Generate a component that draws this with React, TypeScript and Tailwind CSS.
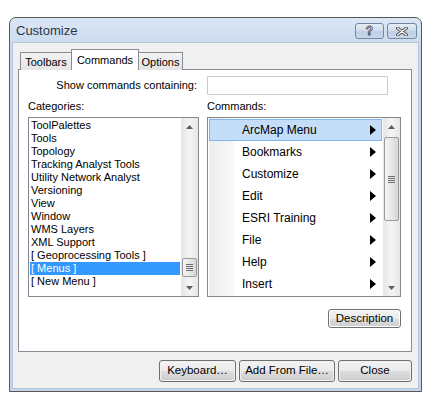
import React from 'react'

const categories = [
  'ToolPalettes',
  'Tools',
  'Topology',
  'Tracking Analyst Tools',
  'Utility Network Analyst',
  'Versioning',
  'View',
  'Window',
  'WMS Layers',
  'XML Support',
  '[ Geoprocessing Tools ]',
  '[ Menus ]',
  '[ New Menu ]',
]

const commands = ['ArcMap Menu', 'Bookmarks', 'Customize', 'Edit', 'ESRI Training', 'File', 'Help', 'Insert']

function Arrow({ dir }: { dir: 'up' | 'down' }) {
  return (
    <svg width="7" height="4" viewBox="0 0 7 4">
      {dir === 'up' ? <path d="M0 4 L3.5 0 L7 4 Z" fill="#5d5d5d" /> : <path d="M0 0 L3.5 4 L7 0 Z" fill="#5d5d5d" />}
    </svg>
  )
}

function Grip() {
  return (
    <div className="flex flex-col gap-[1px] items-center">
      <div className="w-[7px] h-[1px] bg-[#6d6d6d]" />
      <div className="w-[7px] h-[1px] bg-[#6d6d6d]" />
      <div className="w-[7px] h-[1px] bg-[#6d6d6d]" />
      <div className="w-[7px] h-[1px] bg-[#6d6d6d]" />
    </div>
  )
}

function ScrollBar({ thumbTop, thumbHeight }: { thumbTop: number; thumbHeight: number }) {
  return (
    <div className="relative w-[17px] h-full bg-gradient-to-r from-[#e6e6e6] via-[#f4f4f4] to-[#e6e6e6]">
      <div className="absolute top-0 left-0 w-[17px] h-[17px] flex items-center justify-center">
        <Arrow dir="up" />
      </div>
      <div
        className="absolute left-[1px] w-[15px] rounded-[2px] border border-[#9a9a9a] bg-gradient-to-r from-[#f3f3f3] via-[#e8e8e8] to-[#d6d6d6] flex items-center justify-center"
        style={{ top: thumbTop, height: thumbHeight }}
      >
        <Grip />
      </div>
      <div className="absolute bottom-0 left-0 w-[17px] h-[17px] flex items-center justify-center">
        <Arrow dir="down" />
      </div>
    </div>
  )
}

function Button({ children, className }: { children: React.ReactNode; className: string }) {
  return (
    <div className={`rounded-[3px] border border-[#707070] p-[1px] ${className}`}>
      <div className="w-full h-full rounded-[2px] flex items-center justify-center bg-[linear-gradient(#f2f2f2_0%,#ebebeb_50%,#dddddd_51%,#cfcfcf_100%)] text-[#000]">
        {children}
      </div>
    </div>
  )
}

export default function App() {
  return (
    <div className="w-[442px] h-[414px] bg-white font-['Liberation_Sans',Arial,sans-serif] text-[11px] text-black overflow-hidden pt-[17px] pl-[9px]">
      <div className="w-[413px] h-[375px] border border-[#575757] rounded-t-[7px] bg-[linear-gradient(#dbe6f4,#c9d9ed_30px,#c4d5ea)] flex flex-col">
        {/* title bar */}
        <div className="h-[24px] flex items-center pl-[6px] pr-[4px] relative">
          <span className="text-[13px] text-[#2b3645] mt-[2px]">Customize</span>
          <div className="ml-auto flex gap-[3px] mt-[2px]">
            <div className="w-[29px] h-[16px] rounded-[3px] border border-[#75879f] bg-[linear-gradient(#e6eef8,#cfdbeb_50%,#bfcfe4_51%,#c9d8eb)] flex items-center justify-center">
              <span className="text-[12px] font-bold text-[#f4f4f4] leading-none [-webkit-text-stroke:0.8px_#4a4a4a]">?</span>
            </div>
            <div className="w-[30px] h-[16px] rounded-[3px] border border-[#75879f] bg-[linear-gradient(#e6eef8,#cfdbeb_50%,#bfcfe4_51%,#c9d8eb)] flex items-center justify-center">
              <svg width="12" height="9" viewBox="0 0 12 9">
                <path d="M1.5 1 L10.5 8 M10.5 1 L1.5 8" stroke="#4e4e4e" strokeWidth="3.2" strokeLinecap="round" />
                <path d="M1.5 1 L10.5 8 M10.5 1 L1.5 8" stroke="#f4f4f4" strokeWidth="1.4" strokeLinecap="round" />
              </svg>
            </div>
          </div>
        </div>

        {/* body */}
        <div className="flex-1 mx-[2px] mb-[2px] border border-[#b5c6da] bg-[#f0f0f0] flex flex-col pl-[5px] pr-[6px]">
          {/* tabs */}
          <div className="flex items-end h-[27px] pl-[2px] relative z-10 -mb-[1px]">
            <div className="w-[52px] h-[18px] border border-[#898c95] border-b-0 bg-[linear-gradient(#f3f3f3,#e4e4e4)] flex items-center justify-center text-[11px] pt-[2px] rounded-t-[1px]">
              Toolbars
            </div>
            <div className="w-[68px] h-[21px] border border-[#898c95] border-b-0 bg-white -mx-[1px] flex items-start justify-center text-[11px] pt-[2px] rounded-t-[1px]">
              Commands
            </div>
            <div className="w-[45px] h-[18px] border border-[#898c95] border-b-0 bg-[linear-gradient(#f3f3f3,#e4e4e4)] flex items-center justify-center text-[11px] pt-[2px] rounded-t-[1px]">
              Options
            </div>
          </div>

          {/* panel */}
          <div className="h-[283px] border border-[#898c95] bg-white flex flex-col pl-[9px] pr-[9px]">
            <div className="flex mt-[6px] h-[19px] items-center">
              <div className="w-[179px] text-right pr-[10px] text-[11px]">Show commands containing:</div>
              <div className="w-[181px] h-[19px] border border-[#c5c9d0] rounded-[1px] bg-white" />
            </div>

            <div className="flex h-[22px] items-center text-[11px]">
              <div className="w-[179px]">Categories:</div>
              <div>Commands:</div>
            </div>

            <div className="flex gap-[8px] h-[180px]">
              {/* categories list */}
              <div className="w-[171px] h-full border border-[#828790] bg-white flex">
                <div className="flex-1 pt-[1px] pl-[1px] pr-[1px] overflow-hidden">
                  {categories.map((c) => (
                    <div
                      key={c}
                      className={`h-[13px] leading-[13px] pl-[1px] whitespace-nowrap text-[11px] ${
                        c === '[ Menus ]' ? 'bg-[#3399ff] text-white' : ''
                      }`}
                    >
                      {c}
                    </div>
                  ))}
                </div>
                <ScrollBar thumbTop={140} thumbHeight={19} />
              </div>

              {/* commands list */}
              <div className="w-[194px] h-full border border-[#828790] bg-white flex">
                <div className="flex-1 relative p-[1px] overflow-hidden">
                  <div className="absolute left-[1px] top-0 bottom-0 w-[26px] bg-gradient-to-r from-[#ececec] to-[#fafafa]" />
                  <div className="relative">
                    {commands.map((c, i) => (
                      <div
                        key={c}
                        className={`h-[22px] flex items-center text-[12px] ${
                          i === 0 ? 'bg-[#c4ddf8] border border-[#84b6ea]' : 'border border-transparent'
                        }`}
                      >
                        <span className="pl-[32px] flex-1">{c}</span>
                        <svg width="6" height="10" viewBox="0 0 6 10" className="mr-[5px]">
                          <path d="M0 0 L6 5 L0 10 Z" fill="#000" />
                        </svg>
                      </div>
                    ))}
                  </div>
                </div>
                <ScrollBar thumbTop={19} thumbHeight={84} />
              </div>
            </div>

            <div className="flex justify-end mt-[12px]">
              <Button className="w-[73px] h-[19px] text-[11.5px] mr-[1px]">Description</Button>
            </div>
          </div>

          {/* bottom buttons */}
          <div className="flex justify-end gap-[3px] mt-[8px]">
            <Button className="w-[77px] h-[22px] text-[11.5px]">Keyboard…</Button>
            <Button className="w-[96px] h-[22px] text-[11.5px]">Add From File…</Button>
            <Button className="w-[74px] h-[22px] text-[11.5px]">Close</Button>
          </div>
        </div>
      </div>
    </div>
  )
}
